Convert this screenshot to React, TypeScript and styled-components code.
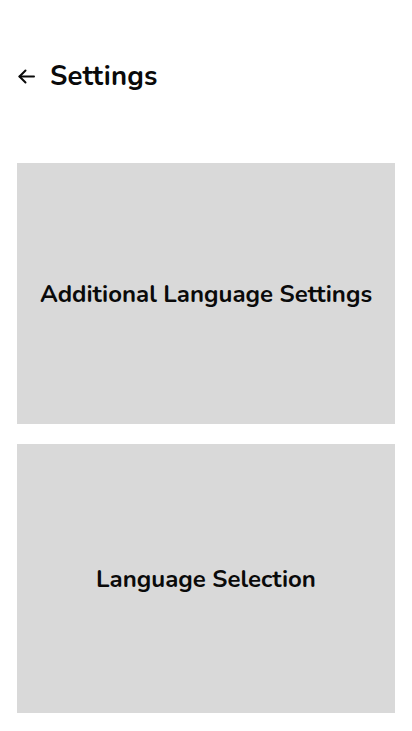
import styled, { createGlobalStyle } from 'styled-components';

const GlobalStyle = createGlobalStyle`
  html, body {
    margin: 0;
    padding: 0;
    background: #ffffff;
  }
  body {
    font-family: "Nunito", "Lato", "Noto Sans", sans-serif;
    color: #0a0a0a;
  }
`;

const Page = styled.div`
  width: 412px;
  min-height: 731px;
  box-sizing: border-box;
  padding: 54px 17px 18px 17px;
  display: flex;
  flex-direction: column;
`;

const Header = styled.header`
  display: flex;
  align-items: center;
  gap: 14px;
  height: 44px;
`;

const BackButton = styled.button`
  display: flex;
  align-items: center;
  justify-content: center;
  width: 19px;
  height: 19px;
  padding: 0;
  border: none;
  background: none;
  color: #0a0a0a;
  cursor: pointer;
`;

const Title = styled.h1`
  margin: 0;
  font-size: 27.5px;
  font-weight: 700;
  letter-spacing: 0.2px;
`;

const CardList = styled.div`
  display: flex;
  flex-direction: column;
  gap: 20px;
  margin-top: 65px;
`;

const Card = styled.button<{ $height: number }>`
  display: flex;
  align-items: center;
  justify-content: center;
  width: 378px;
  height: ${(p) => p.$height}px;
  padding: 0;
  border: none;
  background: #d9d9d9;
  font-family: inherit;
  font-size: 24px;
  font-weight: 700;
  color: #0a0a0a;
  cursor: pointer;
`;

export default function App() {
  return (
    <>
      <GlobalStyle />
      <Page>
        <Header>
          <BackButton aria-label="Back">
            <svg width="19" height="19" viewBox="0 0 19 19" fill="none" stroke="currentColor" strokeWidth="2" strokeLinecap="round" strokeLinejoin="round">
              <path d="M17 9.5H2.5" />
              <path d="M8.5 3.5L2.5 9.5L8.5 15.5" />
            </svg>
          </BackButton>
          <Title>Settings</Title>
        </Header>
        <CardList>
          <Card $height={261}>Additional Language Settings</Card>
          <Card $height={269}>Language Selection</Card>
        </CardList>
      </Page>
    </>
  );
}
